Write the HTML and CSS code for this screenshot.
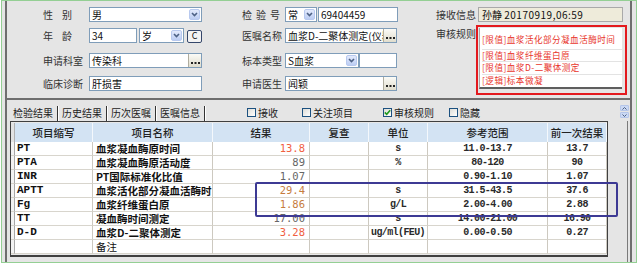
FILE: index.html
```html
<!DOCTYPE html>
<html lang="zh-CN">
<head>
  <meta charset="UTF-8" />
  <title>检验审核</title>
  <link rel="stylesheet" href="styles.css">
</head>
<body>
<div class="frame">
  <div class="panel">
    <div class="top">
      <div class="col col-a">
        <div class="row">
          <span class="lbl sp9">性别</span>
          <div class="box w113">男<span class="dd"><svg width="9" height="9" viewBox="0 0 9 9"><path d="M2 3 L4.5 5.5 L7 3" fill="none" stroke="#4d6185" stroke-width="1.6"/></svg></span></div>
        </div>
        <div class="row">
          <span class="lbl sp9">年龄</span>
          <div class="box w48">34</div>
          <div class="box w45 gap2">岁<span class="dd"><svg width="9" height="9" viewBox="0 0 9 9"><path d="M2 3 L4.5 5.5 L7 3" fill="none" stroke="#4d6185" stroke-width="1.6"/></svg></span></div>
          <span class="cbtn">C</span>
        </div>
        <div class="row">
          <span class="lbl">申请科室</span>
          <div class="box w113">传染科<span class="more"><svg width="9" height="3" viewBox="0 0 9 3"><rect x="0" y="1" width="2" height="2" fill="#222"/><rect x="3.5" y="1" width="2" height="2" fill="#222"/><rect x="7" y="1" width="2" height="2" fill="#222"/></svg></span></div>
        </div>
        <div class="row">
          <span class="lbl">临床诊断</span>
          <div class="box w113">肝损害</div>
        </div>
      </div>

      <div class="col col-b">
        <div class="row">
          <span class="lbl sp4">检验号</span>
          <div class="box w32">常<span class="dd"><svg width="9" height="9" viewBox="0 0 9 9"><path d="M2 3 L4.5 5.5 L7 3" fill="none" stroke="#4d6185" stroke-width="1.6"/></svg></span></div>
          <div class="box w80 gap1">69404459</div>
        </div>
        <div class="row">
          <span class="lbl">医嘱名称</span>
          <div class="box w112"><span class="clip">血浆D-二聚体测定(仪器)</span><span class="more"><svg width="9" height="3" viewBox="0 0 9 3"><rect x="0" y="1" width="2" height="2" fill="#222"/><rect x="3.5" y="1" width="2" height="2" fill="#222"/><rect x="7" y="1" width="2" height="2" fill="#222"/></svg></span></div>
        </div>
        <div class="row">
          <span class="lbl">标本类型</span>
          <div class="box w74">S血浆<span class="dd"><svg width="9" height="9" viewBox="0 0 9 9"><path d="M2 3 L4.5 5.5 L7 3" fill="none" stroke="#4d6185" stroke-width="1.6"/></svg></span></div>
          <div class="box w38"></div>
        </div>
        <div class="row">
          <span class="lbl">申请医生</span>
          <div class="box w112">闻颖<span class="more"><svg width="9" height="3" viewBox="0 0 9 3"><rect x="0" y="1" width="2" height="2" fill="#222"/><rect x="3.5" y="1" width="2" height="2" fill="#222"/><rect x="7" y="1" width="2" height="2" fill="#222"/></svg></span></div>
        </div>
      </div>

      <div class="col col-c">
        <div class="row">
          <span class="lbl">接收信息</span>
          <div class="info">孙静 <span class="ts">20170919,06:59</span></div>
        </div>
        <div class="row row-rules">
          <span class="lbl">审核规则</span>
          <div class="rules">
            <ul class="rule-list">
              <li>[限值]血浆活化部分凝血活酶时间</li>
              <li>[限值]血浆纤维蛋白原</li>
              <li>[限值]血浆D-二聚体测定</li>
              <li>[逻辑]标本微凝</li>
            </ul>
          </div>
        </div>
      </div>
    </div>

    <div class="tabbar">
      <div class="tabs">
        <span class="tab active">检验结果</span>
        <span class="tab">历史结果</span>
        <span class="tab">历次医嘱</span>
        <span class="tab">医嘱信息</span>
      </div>
      <div class="checks">
        <label class="chk"><span class="cb"></span>接收</label>
        <label class="chk"><span class="cb"></span>关注项目</label>
        <label class="chk"><span class="cb"><svg width="7" height="7" viewBox="0 0 7 7"><path d="M0.8 3.4 L2.7 5.3 L6.2 1.2" fill="none" stroke="#1f9a1f" stroke-width="1.6"/></svg></span>审核规则</label>
        <label class="chk"><span class="cb"></span>隐藏</label>
      </div>
      <div class="spin">
        <span class="sb"><svg width="5" height="3" viewBox="0 0 5 3"><path d="M0.5 2.5 L2.5 0.5 L4.5 2.5" fill="none" stroke="#4d6185" stroke-width="1"/></svg></span>
        <span class="sb"><svg width="5" height="3" viewBox="0 0 5 3"><path d="M0.5 0.5 L2.5 2.5 L4.5 0.5" fill="none" stroke="#4d6185" stroke-width="1"/></svg></span>
      </div>
    </div>

    <div class="page">
      <div class="grid-wrap">
        <table class="grid">
          <thead>
            <tr>
              <th class="ind"></th>
              <th class="c1">项目缩写</th>
              <th class="c2">项目名称</th>
              <th class="c3">结果</th>
              <th class="c4">复查</th>
              <th class="c5">单位</th>
              <th class="c6">参考范围</th>
              <th class="c7">前一次结果</th>
            </tr>
          </thead>
          <tbody>
            <tr><td class="ind"></td><td class="ab">PT</td><td class="nm">血浆凝血酶原时间</td><td class="rs red">13.8</td><td></td><td class="ct">s</td><td class="ct">11.0-13.7</td><td class="ct">13.7</td></tr>
            <tr><td class="ind"></td><td class="ab">PTA</td><td class="nm">血浆凝血酶原活动度</td><td class="rs gray">89</td><td></td><td class="ct">%</td><td class="ct">80-120</td><td class="ct">90</td></tr>
            <tr><td class="ind"></td><td class="ab">INR</td><td class="nm">PT国际标准化比值</td><td class="rs gray">1.07</td><td></td><td class="ct"></td><td class="ct">0.90-1.10</td><td class="ct">1.07</td></tr>
            <tr><td class="ind"></td><td class="ab">APTT</td><td class="nm">血浆活化部分凝血活酶时</td><td class="rs orange">29.4</td><td></td><td class="ct">s</td><td class="ct">31.5-43.5</td><td class="ct">37.6</td></tr>
            <tr><td class="ind"></td><td class="ab">Fg</td><td class="nm">血浆纤维蛋白原</td><td class="rs orange">1.86</td><td></td><td class="ct">g/L</td><td class="ct">2.00-4.00</td><td class="ct">2.88</td></tr>
            <tr><td class="ind"></td><td class="ab">TT</td><td class="nm">凝血酶时间测定</td><td class="rs gray">17.00</td><td></td><td class="ct">s</td><td class="ct">14.00-21.00</td><td class="ct">16.90</td></tr>
            <tr><td class="ind"></td><td class="ab">D-D</td><td class="nm">血浆D-二聚体测定</td><td class="rs red">3.28</td><td></td><td class="ct">ug/ml(FEU)</td><td class="ct">0.00-0.50</td><td class="ct">0.27</td></tr>
            <tr><td class="ind"></td><td class="ab"></td><td class="nm note">备注</td><td></td><td></td><td></td><td></td><td></td></tr>
          </tbody>
        </table>
      </div>
    </div>
  </div>

  <div class="mark"></div>
</div>
</body>
</html>
```

FILE: styles.css
```css
* {
  box-sizing: border-box;
}

body {
  margin: 0;
  font-family: "Noto Sans CJK SC", sans-serif;
  font-size: 10px;
  color: #222;
  background: #fff;
}

.frame {
  position: relative;
  width: 636px;
  height: 263px;
  margin-left: 1px;
  border: 1px solid #94cf94;
  background: #e5e5e5;
}

.panel {
  margin-left: 3px;
  width: 627px;
  height: 261px;
  border-left: 2px solid #6e6e6e;
  border-right: 2px solid #6e6e6e;
}

/* top form */
.top {
  display: flex;
  height: 99px;
  padding: 6px 0 0 36px;
  border-bottom: 2px solid #6e6e6e;
}

.col-a { width: 159px; }
.col-b { width: 155px; margin-left: 40px; }
.col-c { width: 191px; margin-left: 39px; }

.row {
  display: flex;
  align-items: center;
  height: 15px;
}

.row:nth-child(2) { margin-top: 6px; }
.row:nth-child(3) { margin-top: 10px; }
.row:nth-child(4) { margin-top: 8px; }

.lbl {
  flex: none;
  color: #333;
  line-height: 15px;
  white-space: nowrap;
}

.col-a .lbl { width: 46px; }
.col-b .lbl { width: 43px; }
.col-c .lbl { width: 42px; }

.sp9 { letter-spacing: 9px; }
.sp4 { letter-spacing: 4px; }

.box {
  position: relative;
  flex: none;
  display: flex;
  align-items: center;
  height: 15px;
  padding-left: 2px;
  border: 1px solid #7f9db9;
  background: #fff;
  color: #111;
  line-height: 13px;
  overflow: hidden;
  white-space: nowrap;
}

.w113 { width: 113px; }
.w112 { width: 112px; }
.w80 { width: 80px; }
.w74 { width: 74px; }
.w48 { width: 48px; }
.w45 { width: 45px; }
.w38 { width: 38px; }
.w32 { width: 32px; }
.gap1 { margin-left: 1px; }
.gap2 { margin-left: 2px; }

.clip {
  overflow: hidden;
}

.dd {
  position: absolute;
  right: 1px;
  top: 1px;
  width: 11px;
  height: 11px;
  display: flex;
  align-items: center;
  justify-content: center;
  border: 1px solid #b8c9ef;
  border-radius: 2px;
  background: linear-gradient(#e3eafc, #bccdf3);
}

.more {
  position: absolute;
  right: 0;
  top: 0;
  width: 13px;
  height: 13px;
  display: flex;
  align-items: flex-end;
  justify-content: center;
  padding-bottom: 3px;
  border-left: 1px solid #b0ad9f;
  background: linear-gradient(#fbfbf7, #e0ddcd);
}

.cbtn {
  flex: none;
  align-self: flex-end;
  width: 15px;
  height: 13px;
  margin-left: 3px;
  border: 1.5px solid #35476b;
  border-radius: 2px;
  background: #f3f3f3;
  font-size: 9px;
  line-height: 10px;
  text-align: center;
  color: #111;
}

.info {
  width: 145px;
  height: 15px;
  padding-left: 3px;
  border: 1px solid #a9a9a9;
  background: #eeebda;
  color: #111;
  line-height: 13px;
  white-space: nowrap;
}

.ts {
  letter-spacing: 0.5px;
}

.col-c .row-rules {
  height: 70px;
  margin-top: 3px;
  align-items: flex-start;
}

.row-rules .lbl {
  width: 40px;
  margin-top: 1px;
}

.rules {
  width: 151px;
  height: 70px;
  padding: 1px 3px 0 1px;
  border: 2px solid #e3191e;
  background: #e5e5e5;
}

.rule-list {
  list-style: none;
  margin: 0;
  padding: 6px 0 0 2px;
  background: #fff;
  border-left: 1px solid #a8a8a8;
  border-bottom: 2px solid #5e5e5e;
  font-size: 8.6px;
  letter-spacing: 0.45px;
  color: #e8352b;
}

.rule-list li {
  height: 12.5px;
  line-height: 11.5px;
  border-bottom: 1px solid #e3e3e3;
  white-space: nowrap;
}

.rule-list li:first-child {
  height: 15.5px;
}

.rule-list li:last-child {
  border-bottom: none;
}

/* tabs + checks */
.tabbar {
  display: flex;
  align-items: flex-end;
  height: 21px;
  padding-left: 3px;
}

.tabs {
  display: flex;
}

.tab {
  height: 15px;
  padding: 0 4px;
  line-height: 14px;
  border-right: 1px solid #333;
  box-shadow: 1px 0 0 #fff;
  color: #222;
}

.tab:first-child {
  padding-left: 3px;
}

.checks {
  display: flex;
  align-items: center;
  height: 15px;
  margin-left: 42px;
  margin-bottom: 1px;
}

.chk {
  display: flex;
  align-items: center;
  color: #222;
}

.chk:nth-child(2) { margin-left: 24px; }
.chk:nth-child(3) { margin-left: 30px; }
.chk:nth-child(4) { margin-left: 15px; }

.cb {
  width: 9px;
  height: 9px;
  margin-right: 2px;
  display: flex;
  align-items: center;
  justify-content: center;
  border: 1px solid #1c5180;
  background: linear-gradient(135deg, #dcdcd7, #fff);
}

.spin {
  align-self: flex-start;
  display: flex;
  flex-direction: column;
  gap: 1px;
  margin: 5px 1px 0 auto;
}

.sb {
  width: 9px;
  height: 6px;
  display: flex;
  align-items: center;
  justify-content: center;
  border: 1px solid #b5c6ea;
  border-radius: 1px;
  background: #cbd9f4;
}

/* result grid */
.page {
  height: 141px;
  margin-right: 2px;
  border-right: 1px solid #7a7a7a;
}

.grid-wrap {
  width: 598px;
  height: 136px;
  margin-left: 3px;
  padding-top: 1px;
  border: 1px solid #404040;
  border-bottom-width: 2px;
  background: #e8e8e8;
}

.grid {
  width: 596px;
  table-layout: fixed;
  border-spacing: 0;
}

.grid th,
.grid td {
  padding: 0;
  overflow: hidden;
  white-space: nowrap;
}

.grid th {
  height: 19px;
  background: #d3e3f3;
  border-right: 1px solid #f4f8fc;
  font-weight: 500;
  font-size: 10.5px;
  color: #222;
}

.grid th.ind {
  background: #e2e2e2;
  border-right: 1px solid #b0b0b0;
}

.ind { width: 4px; }
.c1 { width: 78px; }
.c2 { width: 120px; }
.c3 { width: 97px; }
.c4 { width: 59px; }
.c5 { width: 59px; }
.c6 { width: 120px; }
.c7 { width: 59px; }

.grid td {
  height: 14px;
  line-height: 13px;
  background: #fff;
  border-right: 1px solid #cdc9c0;
  border-bottom: 1px solid #d8d5cd;
  color: #111;
}

.grid td.ind {
  background: #f2f2f2;
  border-right: 1px solid #a8a8a8;
}

.ab {
  padding-left: 2px !important;
  font-family: "Liberation Mono", monospace;
  font-weight: bold;
  font-size: 11px;
}

.nm {
  padding-left: 3px !important;
  font-weight: bold;
  font-size: 10.5px;
}

.nm.note {
  font-weight: normal;
}

.rs {
  text-align: right;
  padding-right: 4px !important;
  font-family: "DejaVu Sans Mono", monospace;
  font-size: 10.5px;
}

.ct {
  text-align: center;
  font-family: "Liberation Mono", monospace;
  font-weight: bold;
  font-size: 10px;
  letter-spacing: -0.6px;
}

.grid td.ct {
  color: #2a2a2a;
}

.grid td.red { color: #f0603f; }
.grid td.orange { color: #c67c3e; }
.grid td.gray { color: #666; }

/* highlight drawn over the grid */
.mark {
  position: absolute;
  left: 253px;
  top: 181px;
  width: 363px;
  height: 35px;
  border: 2px solid #3d3a94;
  border-radius: 2px;
}
```
